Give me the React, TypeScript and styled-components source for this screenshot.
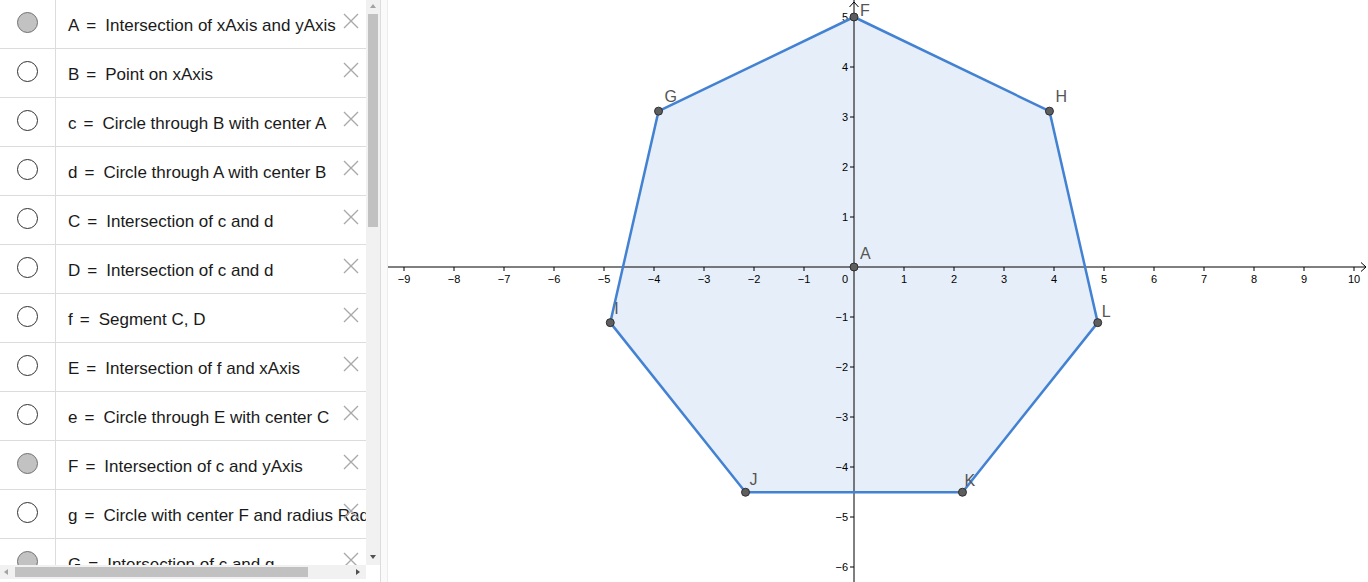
import styled, { createGlobalStyle } from 'styled-components';

const GlobalStyle = createGlobalStyle`
  html, body {
    margin: 0;
    padding: 0;
    overflow: hidden;
    background: #fff;
  }
`;

type Row = { name: string; def: string; shown: boolean };

const ROWS: Row[] = [
  { name: 'A', def: 'Intersection of xAxis and yAxis', shown: true },
  { name: 'B', def: 'Point on xAxis', shown: false },
  { name: 'c', def: 'Circle through B with center A', shown: false },
  { name: 'd', def: 'Circle through A with center B', shown: false },
  { name: 'C', def: 'Intersection of c and d', shown: false },
  { name: 'D', def: 'Intersection of c and d', shown: false },
  { name: 'f', def: 'Segment C, D', shown: false },
  { name: 'E', def: 'Intersection of f and xAxis', shown: false },
  { name: 'e', def: 'Circle through E with center C', shown: false },
  { name: 'F', def: 'Intersection of c and yAxis', shown: true },
  { name: 'g', def: 'Circle with center F and radius Radius(e)', shown: false },
  { name: 'G', def: 'Intersection of c and g', shown: true },
];

// graphics view: origin and scale in local svg coordinates
const OX = 466;
const OY = 267;
const UNIT = 50;
const W = 980;
const H = 582;

const px = (x: number) => OX + x * UNIT;
const py = (y: number) => OY - y * UNIT;

const heptagon = Array.from({ length: 7 }, (_, i) => {
  const a = Math.PI / 2 + (i * 2 * Math.PI) / 7;
  return { x: px(5 * Math.cos(a)), y: py(5 * Math.sin(a)) };
});

const POINTS = [
  { name: 'A', x: px(0), y: py(0), lx: 6, ly: -8 },
  { name: 'F', ...heptagon[0], lx: 6, ly: -1 },
  { name: 'G', ...heptagon[1], lx: 6, ly: -9 },
  { name: 'I', ...heptagon[2], lx: 4, ly: -9 },
  { name: 'J', ...heptagon[3], lx: 4, ly: -7 },
  { name: 'K', ...heptagon[4], lx: 2, ly: -6 },
  { name: 'L', ...heptagon[5], lx: 4, ly: -6 },
  { name: 'H', ...heptagon[6], lx: 6, ly: -9 },
];

const minus = (n: number) => (n < 0 ? `\u2212${-n}` : `${n}`);

export default function App() {
  const xs = Array.from({ length: 20 }, (_, i) => i - 9).filter((n) => n !== 0);
  const ys = Array.from({ length: 12 }, (_, i) => i - 6).filter((n) => n !== 0);

  return (
    <>
      <GlobalStyle />
      <Page>
        <AlgebraPanel>
          <ListArea>
            <List>
              {ROWS.map((row) => (
                <ItemRow key={row.name}>
                  <ToggleCell>
                    <Toggle $shown={row.shown} />
                  </ToggleCell>
                  <TextCell>
                    {row.name}
                    <Equals>=</Equals>
                    {row.def}
                  </TextCell>
                  <DeleteButton aria-label="delete">
                    <svg width="16" height="16" viewBox="0 0 16 16">
                      <path d="M1 1L15 15M15 1L1 15" stroke="#a9a9a9" strokeWidth="1.4" fill="none" />
                    </svg>
                  </DeleteButton>
                </ItemRow>
              ))}
            </List>
            <VScroll>
              <ArrowUp />
              <VThumb />
              <ArrowDown />
            </VScroll>
          </ListArea>
          <HScrollRow>
            <HScroll>
              <ArrowLeft />
              <HThumb />
              <ArrowRight />
            </HScroll>
            <Corner />
          </HScrollRow>
        </AlgebraPanel>
        <Splitter />
        <Graphics>
          <svg width={W} height={H} viewBox={`0 0 ${W} ${H}`}>
            <polygon
              points={heptagon.map((p) => `${p.x},${p.y}`).join(' ')}
              fill="#e6eff9"
              stroke="none"
            />
            {/* axes */}
            <line x1={0} y1={OY} x2={W - 2} y2={OY} stroke="#000" strokeWidth={1} />
            <path d={`M${W - 7} ${OY - 4.5}L${W - 2} ${OY}L${W - 7} ${OY + 4.5}`} stroke="#000" fill="none" />
            <line x1={OX} y1={0} x2={OX} y2={H} stroke="#000" strokeWidth={1} />
            <path d={`M${OX - 4.5} 7L${OX} 2L${OX + 4.5} 7`} stroke="#000" fill="none" />
            {xs.map((n) => (
              <g key={`x${n}`}>
                <line x1={px(n)} y1={OY} x2={px(n)} y2={OY + 4} stroke="#000" />
                <AxisLabel x={px(n)} y={OY + 16} textAnchor="middle">
                  {minus(n)}
                </AxisLabel>
              </g>
            ))}
            {ys.map((n) => (
              <g key={`y${n}`}>
                <line x1={OX - 4} y1={py(n)} x2={OX} y2={py(n)} stroke="#000" />
                <AxisLabel x={OX - 6} y={py(n) + 4} textAnchor="end">
                  {minus(n)}
                </AxisLabel>
              </g>
            ))}
            <AxisLabel x={OX - 6} y={OY + 16} textAnchor="end">
              0
            </AxisLabel>
            <polygon
              points={heptagon.map((p) => `${p.x},${p.y}`).join(' ')}
              fill="none"
              stroke="#4382d3"
              strokeWidth={2.5}
              strokeLinejoin="round"
            />
            {POINTS.map((p) => (
              <g key={p.name}>
                <circle cx={p.x} cy={p.y} r={4} fill="#5e5e5e" stroke="#2f2f2f" strokeWidth={1} />
                <PointLabel x={p.x + p.lx} y={p.y + p.ly}>
                  {p.name}
                </PointLabel>
              </g>
            ))}
          </svg>
        </Graphics>
      </Page>
    </>
  );
}

const Page = styled.div`
  display: flex;
  width: 1368px;
  height: 582px;
  overflow: hidden;
  background: #fff;
`;

const AlgebraPanel = styled.div`
  width: 380px;
  height: 582px;
  display: flex;
  flex-direction: column;
  flex-shrink: 0;
`;

const ListArea = styled.div`
  display: flex;
  height: 565px;
  overflow: hidden;
`;

const List = styled.div`
  width: 366px;
  flex-shrink: 0;
  overflow: hidden;
  display: flex;
  flex-direction: column;
`;

const ItemRow = styled.div`
  position: relative;
  display: flex;
  height: 48px;
  flex-shrink: 0;
  border-bottom: 1px solid #dcdcdc;
`;

const ToggleCell = styled.div`
  width: 56px;
  flex-shrink: 0;
  border-right: 1px solid #dcdcdc;
  display: flex;
  justify-content: center;
  padding-top: 12px;
  box-sizing: border-box;
`;

const Toggle = styled.div<{ $shown: boolean }>`
  width: 19px;
  height: 19px;
  border-radius: 50%;
  border: 1px solid ${(p) => (p.$shown ? '#707070' : '#303030')};
  background: ${(p) => (p.$shown ? '#c2c2c2' : '#fff')};
`;

const TextCell = styled.div`
  padding-left: 12px;
  padding-top: 16px;
  font-family: 'Liberation Sans', Arial, sans-serif;
  font-size: 17px;
  color: #1a1a1a;
  white-space: nowrap;
`;

const Equals = styled.span`
  margin: 0 9px 0 7px;
`;

const DeleteButton = styled.div`
  position: absolute;
  left: 343px;
  top: 13px;
  width: 16px;
  height: 16px;
  display: flex;
`;

const VScroll = styled.div`
  width: 14px;
  background: #f1f1f1;
  display: flex;
  flex-direction: column;
  align-items: center;
`;

const ArrowUp = styled.div`
  margin-top: 4px;
  width: 0;
  height: 0;
  border-left: 3.5px solid transparent;
  border-right: 3.5px solid transparent;
  border-bottom: 4px solid #a3a3a3;
`;

const VThumb = styled.div`
  margin-top: 6px;
  width: 10px;
  height: 213px;
  background: #c1c1c1;
`;

const ArrowDown = styled.div`
  margin-top: auto;
  margin-bottom: 6px;
  width: 0;
  height: 0;
  border-left: 3.5px solid transparent;
  border-right: 3.5px solid transparent;
  border-top: 4px solid #505050;
`;

const HScrollRow = styled.div`
  display: flex;
  height: 14px;
`;

const HScroll = styled.div`
  width: 366px;
  background: #f1f1f1;
  display: flex;
  align-items: center;
`;

const ArrowLeft = styled.div`
  margin-left: 4px;
  width: 0;
  height: 0;
  border-top: 3.5px solid transparent;
  border-bottom: 3.5px solid transparent;
  border-right: 4px solid #a3a3a3;
`;

const HThumb = styled.div`
  margin-left: 7px;
  width: 293px;
  height: 10px;
  background: #c1c1c1;
`;

const ArrowRight = styled.div`
  margin-left: auto;
  margin-right: 6px;
  width: 0;
  height: 0;
  border-top: 3.5px solid transparent;
  border-bottom: 3.5px solid transparent;
  border-left: 4px solid #505050;
`;

const Corner = styled.div`
  width: 14px;
  background: #fff;
`;

const Splitter = styled.div`
  width: 8px;
  flex-shrink: 0;
  box-sizing: border-box;
  border-left: 1px solid #dcdcdc;
  border-right: 1px solid #ececec;
  background: #fafafa;
`;

const Graphics = styled.div`
  flex: 1;
  height: 582px;
  overflow: hidden;
  svg {
    display: block;
  }
`;

const AxisLabel = styled.text`
  font-family: 'Liberation Sans', Arial, sans-serif;
  font-size: 11px;
  fill: #000;
`;

const PointLabel = styled.text`
  font-family: 'Liberation Sans', Arial, sans-serif;
  font-size: 16px;
  fill: #555;
`;
